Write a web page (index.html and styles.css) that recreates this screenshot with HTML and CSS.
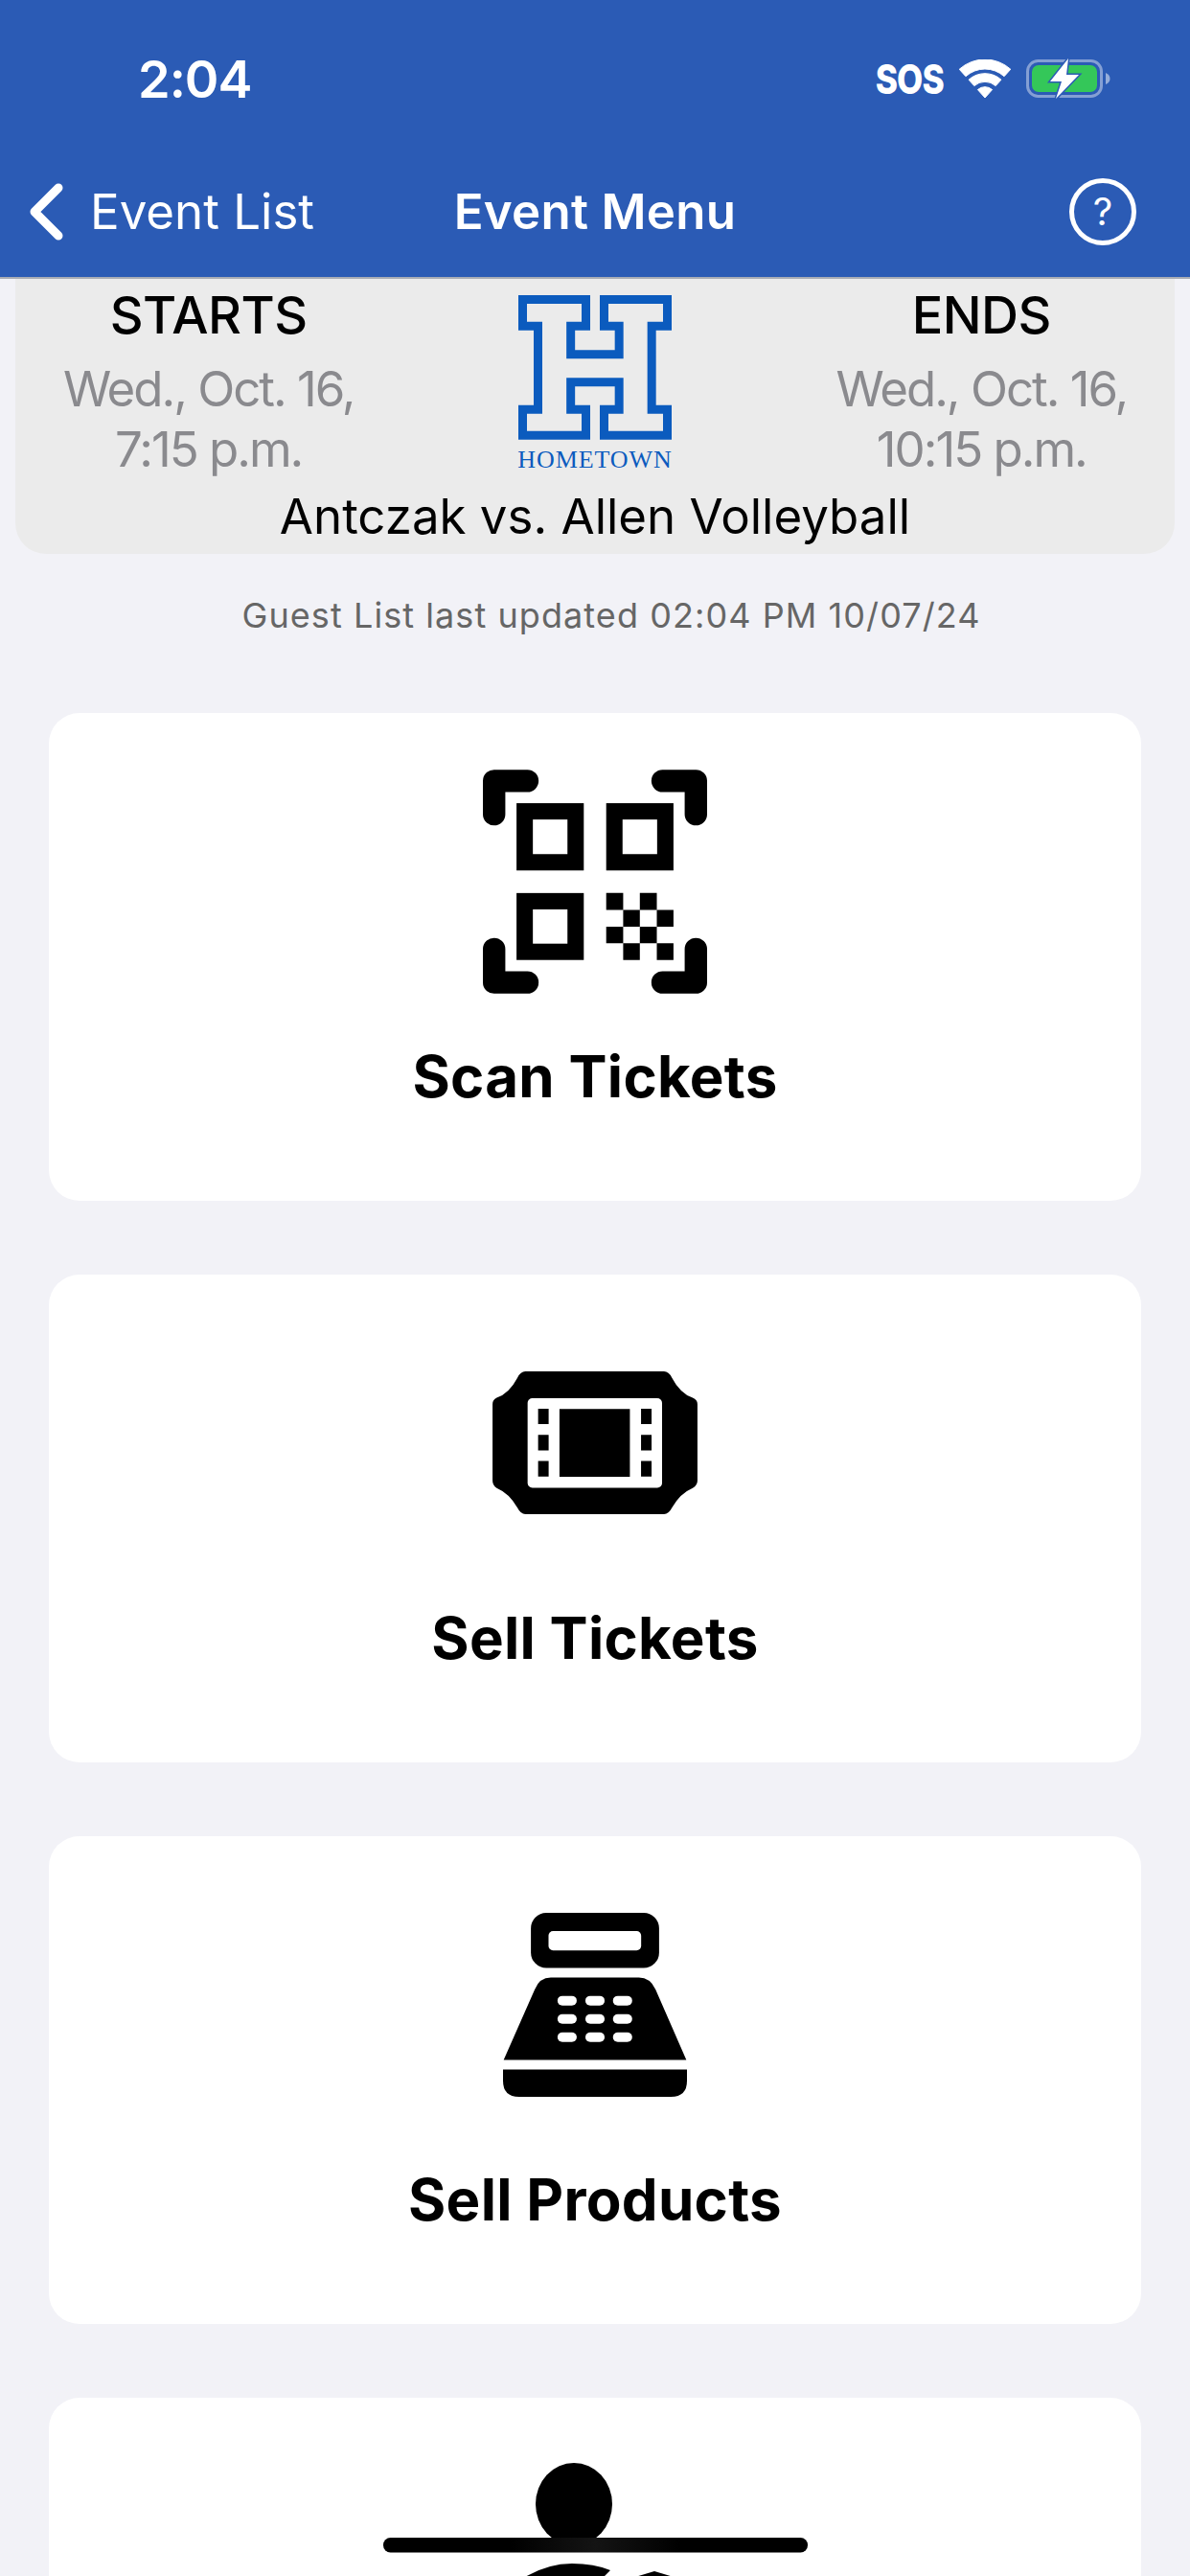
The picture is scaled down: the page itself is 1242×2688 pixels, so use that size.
FILE: index.html
```html
<!DOCTYPE html>
<html lang="en">
<head>
<meta charset="utf-8">
<title>Event Menu</title>
<link rel="stylesheet" href="styles.css">
</head>
<body>
<div class="screen">
  <header class="topbar">
    <div class="status">
      <span class="time">2:04</span>
      <div class="status-right">
        <span class="sos">SOS</span>
        <svg class="wifi" viewBox="0 0 160 120"><g fill="#fff" stroke="#fff" stroke-width="3" stroke-linejoin="round"><path d="M-.3 30.800A120 120 0 0 1 160.300 30.800L140.200 53.100A90 90 0 0 0 19.800 53.100Z"/><path d="M29.200 63.500A76 76 0 0 1 130.800 63.500L113.500 82.800A50 50 0 0 0 46.500 82.800Z"/><path d="M57.300 94.700A34 34 0 0 1 102.700 94.700L80 120Z"/></g></svg>
        <svg class="battery" viewBox="0 0 88 42"><rect x="1.500" y="2.500" width="77" height="37" rx="11" fill="none" stroke="#fff" stroke-opacity=".42" stroke-width="3"/><rect x="6" y="7" width="68" height="28" rx="7" fill="#34c759"/><path d="M83 15 Q87.500 17 87.500 21 Q87.500 25 83 27Z" fill="#fff" fill-opacity=".5"/><path d="M44 0 L25 24 H37 L31 42 L55 17 H42 Z" fill="#fff" stroke="#2b5bb5" stroke-width="3" paint-order="stroke"/></svg>
      </div>
    </div>
    <nav class="navrow">
      <div class="nav-back">
        <svg class="chevron" viewBox="0 0 36 60"><path d="M31 5 L6 30 L31 55" fill="none" stroke="#fff" stroke-width="9" stroke-linecap="round" stroke-linejoin="round"/></svg>
        <span>Event List</span>
      </div>
      <div class="nav-title">Event Menu</div>
      <div class="nav-help"><span class="help-circle">?</span></div>
    </nav>
  </header>

  <section class="event-card">
    <div class="event-cols">
      <div class="event-col">
        <div class="event-label">STARTS</div>
        <div class="event-time">Wed., Oct. 16,<br>7:15 p.m.</div>
      </div>
      <div class="event-logo">
        <svg class="logo-h" viewBox="65 53 480 452"><path d="M78.500 66.500H276.500V150H229V238H380.500V150H333.500V66.500H531.500V150H482.500V411H531.500V491.500H333.500V411H380.500V325H229V411H276.500V491.500H78.500V411H126.500V150H78.500Z" fill="none" stroke="#0b5bbe" stroke-width="27"/></svg>
        <div class="logo-text">HOMETOWN</div>
      </div>
      <div class="event-col">
        <div class="event-label">ENDS</div>
        <div class="event-time">Wed., Oct. 16,<br>10:15 p.m.</div>
      </div>
    </div>
    <div class="event-title">Antczak vs. Allen Volleyball</div>
  </section>

  <p class="updated">Guest List last updated 02:04 PM 10/07/24</p>

  <main class="menu">
    <div class="menu-card">
      <div class="menu-icon">
        <svg class="icon-qr" viewBox="73 68 700 699">
          <g fill="none" stroke="#000" stroke-width="70" stroke-linecap="round" stroke-linejoin="round">
            <path d="M108 207V103H212"/><path d="M738 207V103H634"/><path d="M108 628V732H212"/><path d="M738 628V732H634"/>
          </g>
          <g fill="none" stroke="#000" stroke-width="51">
            <rect x="203.500" y="198" width="159" height="159"/><rect x="483.500" y="198" width="159" height="159"/><rect x="203.500" y="478.500" width="159" height="158"/>
          </g>
          <path d="M458 453h53v53h-53zM563 453h53v53h-53zM511 506h52v52h-52zM616 506h52v52h-52zM458 558h53v52h-53zM563 558h53v52h-53zM511 610h52v52h-52zM616 610h52v52h-52z"/>
        </svg>
      </div>
      <div class="menu-label">Scan Tickets</div>
    </div>
    <div class="menu-card">
      <div class="menu-icon">
        <svg class="icon-ticket" viewBox="72 92 643 448">
          <path d="M175 92H610Q625 92 635 112Q660 160 700 175Q715 182 715 195V435Q715 450 700 458Q660 475 635 520Q625 540 610 540H175Q160 540 150 520Q125 475 85 458Q72 450 72 435V195Q72 182 85 175Q125 160 150 112Q160 92 175 92Z"/>
          <rect x="182" y="176" width="422" height="281" rx="15" fill="#fff"/>
          <path d="M282 210H503V423H282ZM215 209H248V257H215ZM215 291H248V340H215ZM215 373H248V422H215ZM538 209H571V257H538ZM538 291H571V340H538ZM538 373H571V422H538Z"/>
        </svg>
      </div>
      <div class="menu-label">Sell Tickets</div>
    </div>
    <div class="menu-card">
      <div class="menu-icon">
        <svg class="icon-register" viewBox="76 76 574 574">
          <rect x="163" y="76" width="400" height="172" rx="48"/>
          <rect x="218" y="133" width="289" height="60" rx="14" fill="#fff"/>
          <path d="M78 535L175 315Q190 278 225 278H500Q535 278 552 315L648 535Z"/>
          <path d="M76 565H650V600Q650 650 600 650H126Q76 650 76 600Z"/>
          <g fill="#fff">
            <rect x="246" y="335" width="60" height="30" rx="15"/><rect x="333" y="335" width="60" height="30" rx="15"/><rect x="419" y="335" width="60" height="30" rx="15"/>
            <rect x="246" y="392" width="60" height="30" rx="15"/><rect x="333" y="392" width="60" height="30" rx="15"/><rect x="419" y="392" width="60" height="30" rx="15"/>
            <rect x="246" y="449" width="60" height="30" rx="15"/><rect x="333" y="449" width="60" height="30" rx="15"/><rect x="419" y="449" width="60" height="30" rx="15"/>
          </g>
        </svg>
      </div>
      <div class="menu-label">Sell Products</div>
    </div>
    <div class="menu-card">
      <div class="menu-icon">
        <svg class="icon-person" viewBox="0 0 443 215">
          <defs><linearGradient id="barShade"><stop offset="0.300" stop-color="#000"/><stop offset="0.500" stop-color="#141414"/><stop offset="0.700" stop-color="#000"/></linearGradient></defs>
          <ellipse cx="199" cy="43" rx="40" ry="43"/>
          <rect x="0" y="78" width="443" height="15.500" rx="7.500" fill="url(#barShade)"/>
          <path d="M120 135L148 119Q172 105 197 105Q220 105 237 112L230 119V135Z"/>
          <path d="M263 119L283 113L303 119L283 135Z"/>
        </svg>
      </div>
    </div>
  </main>
</div>
</body>
</html>
```
FILE: styles.css
```css
* { box-sizing: border-box; }
html, body { margin: 0; padding: 0; }
body { background: #f2f2f7; font-family: Inter, "Liberation Sans", sans-serif; color: #000; }
.screen { width: 1242px; height: 2688px; overflow: hidden; background: #f2f2f7; }

.topbar { height: 291px; background: #2b5bb5; border-bottom: 2px solid #a9adb5; color: #fff; }
.status { height: 164px; display: flex; justify-content: space-between; align-items: center; padding: 0 83px 0 144px; }
.time { font-size: 54px; font-weight: 600; letter-spacing: -1px; }
.status-right { display: flex; align-items: center; gap: 16px; }
.sos { font-size: 43px; font-weight: 800; letter-spacing: -1px; transform: scaleX(.82); transform-origin: right center; }
.wifi { width: 54px; height: 40px; }
.battery { width: 88px; height: 42px; margin-left: 0; }

.navrow { height: 125px; padding: 0 30px 12px; display: grid; grid-template-columns: 1fr auto 1fr; align-items: center; }
.nav-back { display: flex; align-items: center; gap: 28px; font-size: 51px; }
.chevron { width: 36px; height: 60px; }
.nav-title { font-size: 51px; font-weight: 600; letter-spacing: .3px; }
.nav-help { display: flex; justify-content: flex-end; margin-right: 26px; }
.help-circle { width: 70px; height: 70px; border: 5px solid #fff; border-radius: 50%; display: flex; align-items: center; justify-content: center; font-size: 40px; }

.event-card { margin: 0 16px; height: 287px; background: #ebebeb; border-radius: 0 0 32px 32px; }
.event-cols { display: grid; grid-template-columns: repeat(3, 1fr); height: 215px; }
.event-col { text-align: center; padding-top: 6px; }
.event-label { font-size: 54px; font-weight: 500; line-height: 64px; letter-spacing: -.5px; margin-bottom: 13px; }
.event-time { font-size: 51px; line-height: 63px; color: #8a8a8e; letter-spacing: -2px; }
.event-logo { display: flex; flex-direction: column; align-items: center; padding-top: 17px; }
.logo-h { width: 160px; height: 150.700px; }
.logo-text { font-family: "Liberation Serif", serif; font-size: 26px; font-weight: 400; color: #0b5bbe; line-height: 24px; margin-top: 9px; letter-spacing: .9px; }
.event-title { text-align: center; font-size: 51px; line-height: 66px; }

.updated { margin: 0; padding: 38px 0 0 34px; height: 166px; text-align: center; font-size: 36px; line-height: 52px; color: #666; letter-spacing: 1.07px; }

.menu { padding: 0 51px; display: flex; flex-direction: column; gap: 77px; }
.menu-card { height: 509px; background: #fff; border-radius: 32px; display: flex; flex-direction: column; align-items: center; }
.menu-icon { height: 351px; display: flex; align-items: center; justify-content: center; }
.menu-label { font-size: 60px; font-weight: 700; letter-spacing: .3px; line-height: 56px; }
.icon-qr { width: 234px; height: 234px; }
.icon-ticket { width: 214px; height: 149px; }
.icon-register { width: 192px; height: 192px; }
.icon-person { width: 443px; height: 215px; margin-left: 1px; }
```
